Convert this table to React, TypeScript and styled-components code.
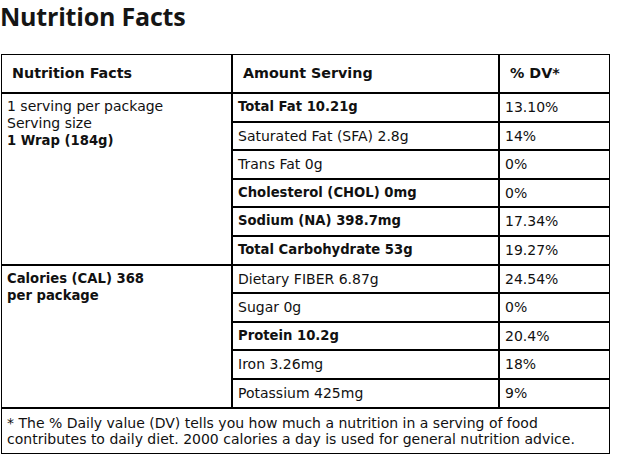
import styled, { createGlobalStyle } from "styled-components";

const GlobalStyle = createGlobalStyle`
  html, body {
    margin: 0;
    padding: 0;
    background: #ffffff;
    font-family: "DejaVu Sans", "Noto Sans", sans-serif;
    color: #111111;
  }
`;

const Page = styled.div`
  padding: 0 0 0 1px;
`;

const Title = styled.h1`
  margin: 0 0 21px -1px;
  font-family: "Open Sans", "DejaVu Sans", sans-serif;
  font-size: 25px;
  line-height: 33px;
  font-weight: 700;
  letter-spacing: -0.2px;
  color: #151515;
`;

const Table = styled.table`
  width: 609px;
  border-collapse: separate;
  border-spacing: 0;
  font-size: 14px;
`;

const HeadCell = styled.th<{ $w: number }>`
  width: ${({ $w }) => $w}px;
  box-sizing: border-box;
  border: 1px solid #000;
  padding: 9px 10px 9px 10px;
  line-height: 19px;
  font-size: 14.3px;
  font-weight: 700;
  text-align: left;
`;

const Cell = styled.td<{ $bold?: boolean; $top?: boolean }>`
  border: 1px solid #000;
  padding: 4px 5px;
  line-height: 18.6px;
  font-size: ${({ $bold }) => ($bold ? "13.2px" : "14px")};
  font-weight: ${({ $bold }) => ($bold ? 700 : 400)};
  vertical-align: ${({ $top }) => ($top ? "top" : "middle")};
`;

const Info = styled.div<{ $bold?: boolean }>`
  line-height: 17px;
  font-size: ${({ $bold }) => ($bold ? "13.2px" : "14px")};
  font-weight: ${({ $bold }) => ($bold ? 700 : 400)};
`;

const Note = styled.td`
  border: 1px solid #000;
  padding: 6px 5px 5px;
  line-height: 16.5px;
`;

type Row = { label: string; dv: string; bold?: boolean };

const rows: Row[] = [
  { label: "Total Fat 10.21g", dv: "13.10%", bold: true },
  { label: "Saturated Fat (SFA) 2.8g", dv: "14%" },
  { label: "Trans Fat 0g", dv: "0%" },
  { label: "Cholesterol (CHOL) 0mg", dv: "0%", bold: true },
  { label: "Sodium (NA) 398.7mg", dv: "17.34%", bold: true },
  { label: "Total Carbohydrate 53g", dv: "19.27%", bold: true },
  { label: "Dietary FIBER 6.87g", dv: "24.54%" },
  { label: "Sugar 0g", dv: "0%" },
  { label: "Protein 10.2g", dv: "20.4%", bold: true },
  { label: "Iron 3.26mg", dv: "18%" },
  { label: "Potassium 425mg", dv: "9%" },
];

export default function App() {
  return (
    <>
      <GlobalStyle />
      <Page>
        <Title>Nutrition Facts</Title>
        <Table>
          <thead>
            <tr>
              <HeadCell $w={231}>Nutrition Facts</HeadCell>
              <HeadCell $w={267}>Amount Serving</HeadCell>
              <HeadCell $w={111}>% DV*</HeadCell>
            </tr>
          </thead>
          <tbody>
            {rows.map((row, i) => (
              <tr key={row.label}>
                {i === 0 && (
                  <Cell rowSpan={6} $top>
                    <Info>1 serving per package</Info>
                    <Info>Serving size</Info>
                    <Info $bold>1 Wrap (184g)</Info>
                  </Cell>
                )}
                {i === 6 && (
                  <Cell rowSpan={5} $top>
                    <Info $bold>Calories (CAL) 368</Info>
                    <Info $bold>per package</Info>
                  </Cell>
                )}
                <Cell $bold={row.bold}>{row.label}</Cell>
                <Cell>{row.dv}</Cell>
              </tr>
            ))}
            <tr>
              <Note colSpan={3}>
                * The % Daily value (DV) tells you how much a nutrition in a serving of food
                contributes to daily diet. 2000 calories a day is used for general nutrition
                advice.
              </Note>
            </tr>
          </tbody>
        </Table>
      </Page>
    </>
  );
}
